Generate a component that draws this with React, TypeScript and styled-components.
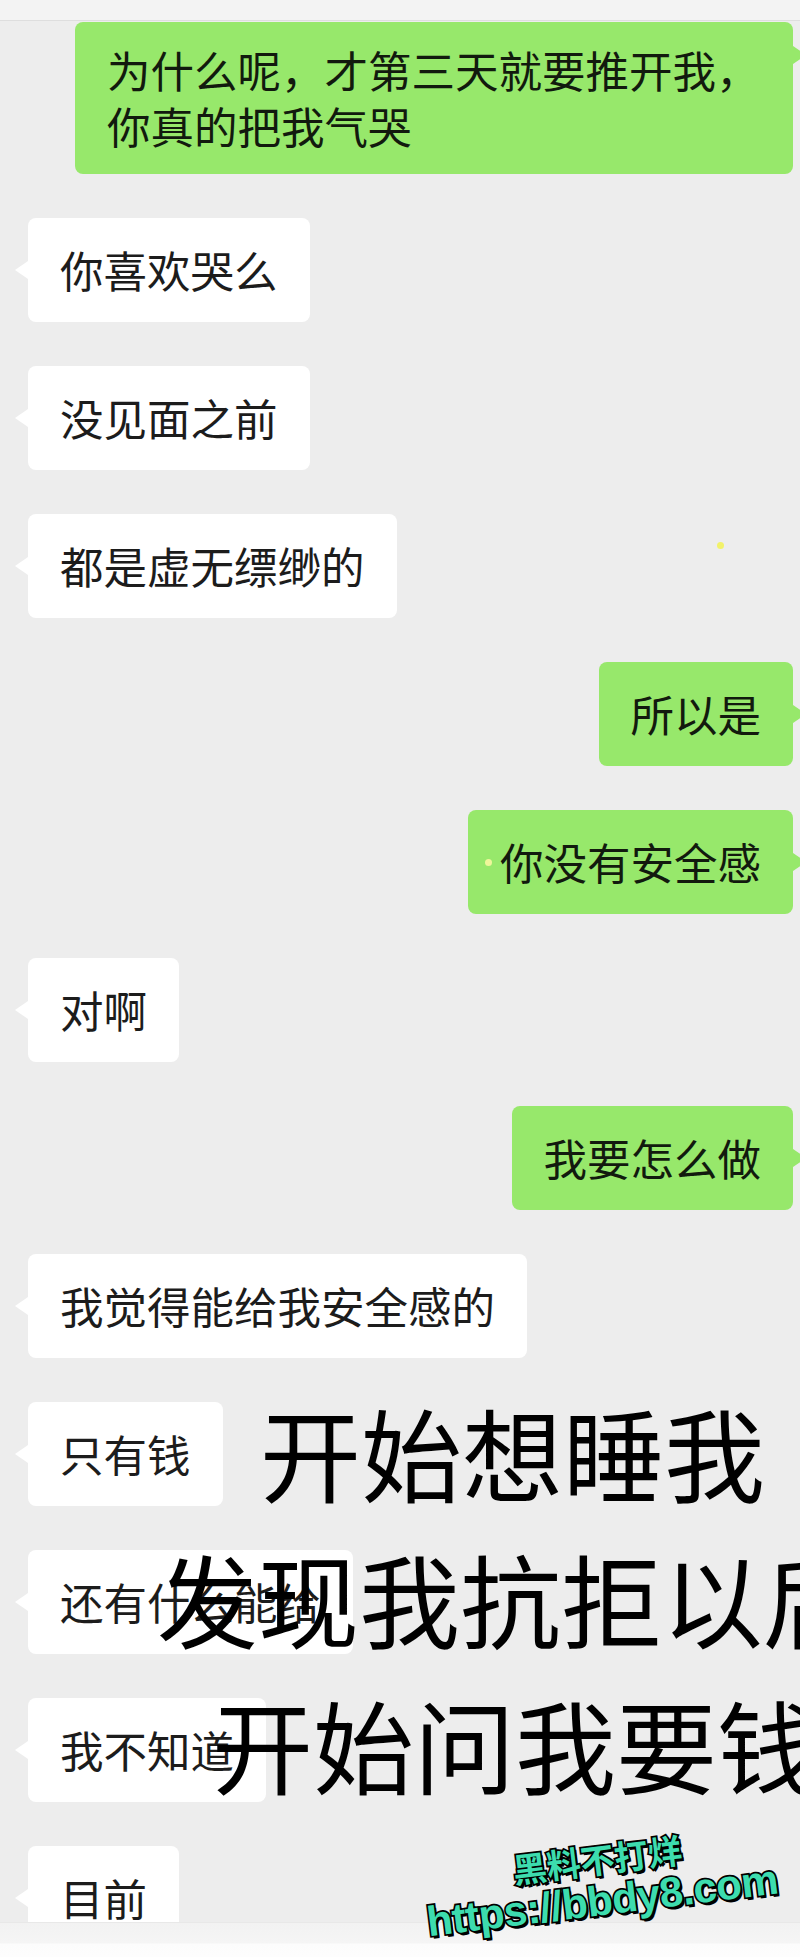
import React from 'react';
import styled, { createGlobalStyle } from 'styled-components';

const GlobalStyle = createGlobalStyle`
  html, body {
    margin: 0;
    padding: 0;
    background: #ededed;
  }
  body {
    font-family: "Noto Sans CJK SC", "Noto Sans", sans-serif;
  }
  * {
    box-sizing: border-box;
  }
`;

const GREEN = '#97e86b';

const Page = styled.div`
  position: relative;
  width: 800px;
  height: 1957px;
  overflow: hidden;
  display: flex;
  flex-direction: column;
  background: #ededed;
`;

const TopBar = styled.div`
  flex: 0 0 21px;
  background: #f3f3f3;
  border-bottom: 1px solid #dedede;
`;

const Chat = styled.div`
  flex: 1;
  min-height: 0;
  overflow: hidden;
  display: flex;
  flex-direction: column;
  gap: 44px;
  padding: 1px 7px 0 28px;
`;

// input area at the bottom, only its top edge is in frame
const BottomBar = styled.div`
  flex: 0 0 35px;
  background: linear-gradient(#f2f2f2 0, #f5f5f5 20px, #fcfcfc 21px, #fdfdfd 100%);
  border-top: 1px solid #e8e8e8;
`;

const Row = styled.div<{ $mine?: boolean }>`
  display: flex;
  flex-shrink: 0;
  justify-content: ${(p) => (p.$mine ? 'flex-end' : 'flex-start')};
`;

const Bubble = styled.div<{ $mine?: boolean; $tight?: boolean; $tailTop?: number }>`
  position: relative;
  max-width: 718px;
  padding: ${(p) => (p.$tight ? '20px 32px' : '24px 32px')};
  border-radius: 8px;
  background: ${(p) => (p.$mine ? GREEN : '#ffffff')};
  color: ${(p) => (p.$mine ? '#121a0e' : '#1c1c1c')};
  font-size: 43.5px;
  line-height: 56px;

  &::before {
    content: '';
    position: absolute;
    top: ${(p) => p.$tailTop ?? 43}px;
    width: 0;
    height: 0;
    border-top: 9px solid transparent;
    border-bottom: 9px solid transparent;
    ${(p) =>
      p.$mine
        ? `right: -13px; border-left: 13px solid ${GREEN};`
        : `left: -13px; border-right: 13px solid #ffffff;`}
  }
`;

const Caption = styled.div`
  position: absolute;
  top: 1378px;
  left: 0;
  width: 800px;
  font-family: "Noto Sans CJK SC", sans-serif;
  font-size: 101px;
  line-height: 146px;
  color: #000;
  white-space: nowrap;
  pointer-events: none;
`;

const CaptionLine = styled.div<{ $indent: number }>`
  padding-left: ${(p) => p.$indent}px;
`;

const Watermark = styled.div`
  position: absolute;
  left: 400px;
  top: 1840px;
  width: 400px;
  transform: rotate(-7deg);
  text-align: center;
  color: #3ddcae;
  -webkit-text-stroke: 3.5px #000;
  paint-order: stroke fill;
  text-shadow: 2px 3px 0 #000;
  white-space: nowrap;
  pointer-events: none;
`;

const BrandLine = styled.div`
  font-family: "Noto Sans CJK SC", sans-serif;
  font-weight: 700;
  font-size: 34px;
  line-height: 38px;
`;

const UrlLine = styled.div`
  font-family: "Liberation Sans", Arial, sans-serif;
  font-weight: 700;
  font-size: 42px;
  line-height: 46px;
  letter-spacing: -0.5px;
`;

const Speck = styled.span<{ $x: number; $y: number; $color: string }>`
  position: absolute;
  left: ${(p) => p.$x}px;
  top: ${(p) => p.$y}px;
  width: 7px;
  height: 7px;
  border-radius: 50%;
  background: ${(p) => p.$color};
  filter: blur(0.6px);
`;

type Msg = { text: string; mine?: boolean };

const messages: Msg[] = [
  { text: '你喜欢哭么' },
  { text: '没见面之前' },
  { text: '都是虚无缥缈的' },
  { text: '所以是', mine: true },
  { text: '你没有安全感', mine: true },
  { text: '对啊' },
  { text: '我要怎么做', mine: true },
  { text: '我觉得能给我安全感的' },
  { text: '只有钱' },
  { text: '还有什么能给' },
  { text: '我不知道' },
  { text: '目前' },
];

export default function App() {
  return (
    <Page>
      <GlobalStyle />
      <TopBar />
      <Chat>
        <Row $mine>
          <Bubble $mine $tight $tailTop={24}>
            为什么呢，才第三天就要推开我，你真的把我气哭
          </Bubble>
        </Row>
        {messages.map((m, i) => (
          <Row key={i} $mine={m.mine}>
            <Bubble $mine={m.mine}>{m.text}</Bubble>
          </Row>
        ))}
      </Chat>
      <BottomBar />

      <Speck $x={717} $y={542} $color="#f2f26a" />
      <Speck $x={485} $y={859} $color="#eef69a" />

      <Caption>
        <CaptionLine $indent={260}>开始想睡我</CaptionLine>
        <CaptionLine $indent={157}>发现我抗拒以后</CaptionLine>
        <CaptionLine $indent={212}>开始问我要钱</CaptionLine>
      </Caption>

      <Watermark>
        <BrandLine>黑料不打烊</BrandLine>
        <UrlLine>https://bbdy8.com</UrlLine>
      </Watermark>
    </Page>
  );
}
